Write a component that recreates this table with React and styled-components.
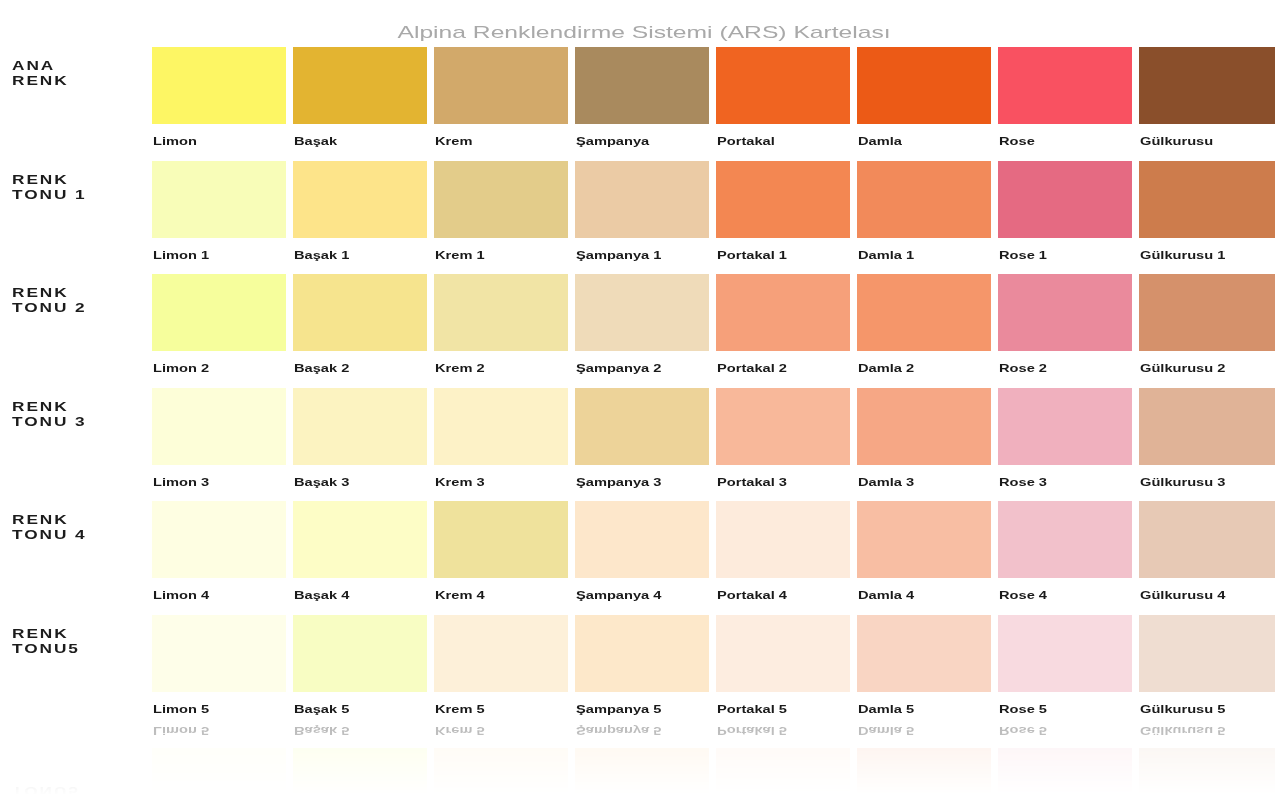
import React from 'react';
import styled, { createGlobalStyle, css } from 'styled-components';

const Global = createGlobalStyle`
  html, body { margin: 0; padding: 0; background: #ffffff; }
  body { font-family: "Liberation Sans", Arial, sans-serif; }
`;

const Page = styled.main`
  width: 1280px;
  height: 794px;
  overflow: hidden;
  background: #ffffff;
`;

const Title = styled.h1`
  margin: 0;
  height: 47px;
  box-sizing: border-box;
  padding-top: 23px;
  padding-left: 8px;
  text-align: center;
  font-weight: normal;
  font-size: 17px;
  line-height: 20px;
  color: #a9a9a9;
`;

const Stretch = styled.span`
  display: inline-block;
  white-space: nowrap;
  transform: scaleX(${(p) => p.$x});
  transform-origin: ${(p) => p.$origin || 'left center'};
`;

const Rows = styled.div`
  display: flex;
  flex-direction: column;
  gap: 12.6px;
`;

const Row = styled.section`
  display: grid;
  grid-template-columns: 145px repeat(7, 134px) 136px;
  column-gap: 7px;
  ${(p) =>
    p.$reflect &&
    css`
      -webkit-box-reflect: below 8px
        linear-gradient(to bottom, transparent 30%, rgba(0, 0, 0, 0.26) 80%, rgba(0, 0, 0, 0.3) 100%);
    `}
`;

const RowLabel = styled.h2`
  margin: 0;
  padding: 12px 0 0 12px;
  font-size: 12.5px;
  line-height: 15px;
  font-weight: bold;
  letter-spacing: 1.4px;
  color: #1c1c1c;
`;

const LabelLine = styled.span`
  display: block;
  white-space: nowrap;
  transform: scaleX(1.38);
  transform-origin: left center;
`;

const Cell = styled.div`
  display: flex;
  flex-direction: column;
`;

const Swatch = styled.div`
  height: 77px;
  background: ${(p) => p.$color};
`;

const Name = styled.div`
  margin-top: 10px;
  padding-left: 1px;
  font-size: 11px;
  line-height: 14px;
  font-weight: bold;
  color: #1a1a1a;
`;

const names = ['Limon', 'Başak', 'Krem', 'Şampanya', 'Portakal', 'Damla', 'Rose', 'Gülkurusu'];

const rows = [
  {
    label: ['ANA', 'RENK'],
    suffix: '',
    colors: ['#FDF664', '#E3B431', '#D2A96A', '#A98A5E', '#F06421', '#EC5A16', '#F95161', '#8A4F2B'],
  },
  {
    label: ['RENK', 'TONU 1'],
    suffix: ' 1',
    colors: ['#F8FDB8', '#FDE48A', '#E3CC8A', '#EBCBA5', '#F38752', '#F28A5A', '#E56A82', '#CD7C4C'],
  },
  {
    label: ['RENK', 'TONU 2'],
    suffix: ' 2',
    colors: ['#F6FE9C', '#F6E48E', '#F1E4A5', '#EFDBB9', '#F6A07A', '#F5966A', '#EA8A9C', '#D5916B'],
  },
  {
    label: ['RENK', 'TONU 3'],
    suffix: ' 3',
    colors: ['#FDFED8', '#FCF3C1', '#FDF2C7', '#EDD399', '#F8B89A', '#F6A785', '#F0B0BE', '#E0B397'],
  },
  {
    label: ['RENK', 'TONU 4'],
    suffix: ' 4',
    colors: ['#FEFEE2', '#FDFDC6', '#EFE29C', '#FDE7CB', '#FDEBDC', '#F8BEA3', '#F2C1CB', '#E7C9B5'],
  },
  {
    label: ['RENK', 'TONU5'],
    suffix: ' 5',
    colors: ['#FEFEE9', '#F8FDC3', '#FDF0D9', '#FDE8CA', '#FDEDE0', '#F9D5C3', '#F8DAE0', '#EFDDD1'],
  },
];

export default function App() {
  return (
    <Page>
      <Global />
      <Title>
        <Stretch $x={1.45} $origin="center center">
          Alpina Renklendirme Sistemi (ARS) Kartelası
        </Stretch>
      </Title>
      <Rows>
        {rows.map((row, i) => (
          <Row key={i} $reflect={i === rows.length - 1}>
            <RowLabel>
              {row.label.map((l) => (
                <LabelLine key={l}>{l}</LabelLine>
              ))}
            </RowLabel>
            {row.colors.map((c, j) => (
              <Cell key={j}>
                <Swatch $color={c} />
                <Name>
                  <Stretch $x={1.33}>{names[j] + row.suffix}</Stretch>
                </Name>
              </Cell>
            ))}
          </Row>
        ))}
      </Rows>
    </Page>
  );
}
